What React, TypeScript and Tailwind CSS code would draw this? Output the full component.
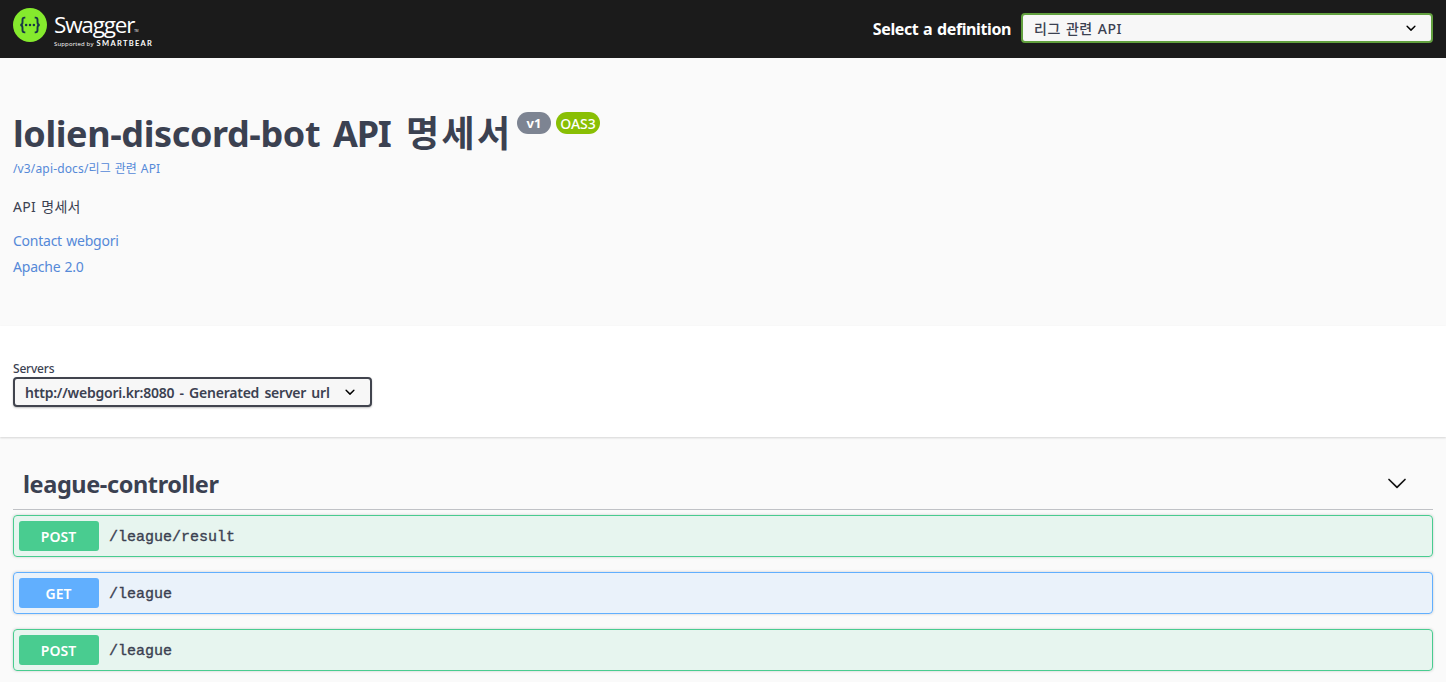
function Chevron() {
  return (
    <svg width="20" height="20" viewBox="0 0 20 20">
      <path d="M13.418 7.859a.695.695 0 0 1 .978 0 .68.68 0 0 1 0 .969l-3.908 3.83a.697.697 0 0 1-.979 0l-3.908-3.83a.68.68 0 0 1 0-.969.695.695 0 0 1 .978 0L10 11l3.418-3.141z" />
    </svg>
  );
}

function LargeChevron() {
  return (
    <svg width="20" height="20" viewBox="0 0 20 20" fill="none" stroke="#111" strokeWidth="1.7" strokeLinecap="round" strokeLinejoin="round">
      <path d="M2 5.5 10 13.3 18 5.5" />
    </svg>
  );
}

function Logo() {
  return (
    <div className="flex w-[150px] shrink-0">
      <svg width="34" height="34" viewBox="0 0 34 34" className="mt-2 shrink-0">
        <circle cx="17" cy="17" r="17" fill="#85ea2d" />
        <g fill="none" stroke="#173647" strokeWidth="1.9">
          <path d="M12.3 9.6h-.8c-1.5 0-2 .8-2 2.1v2.6c0 1.7-.6 2.5-2.1 2.7 1.5.2 2.1 1 2.1 2.7v2.6c0 1.3.5 2.1 2 2.1h.8" />
          <path d="M21.7 9.6h.8c1.5 0 2 .8 2 2.1v2.6c0 1.7.6 2.5 2.1 2.7-1.5.2-2.1 1-2.1 2.7v2.6c0 1.3-.5 2.1-2 2.1h-.8" />
        </g>
        <g fill="#173647">
          <circle cx="13.1" cy="17" r="1.25" />
          <circle cx="17" cy="17" r="1.25" />
          <circle cx="20.9" cy="17" r="1.25" />
        </g>
      </svg>
      <div className="ml-[7px] flex flex-col pt-[11px] font-['Open_Sans',sans-serif] text-white">
        <div className="flex items-end leading-[27px]">
          <span className="text-[22.5px] tracking-[-1.2px]">Swagger</span>
          <span className="pb-[5px] text-[3px] leading-[4px]">TM</span>
        </div>
        <div className="mt-px flex items-center gap-[3px] whitespace-nowrap leading-[10px]">
          <span className="text-[6px] tracking-[0.15px]">Supported by</span>
          <span className="font-[Lato] text-[7.5px] font-bold tracking-[1.3px]">SMARTBEAR</span>
        </div>
      </div>
    </div>
  );
}

const operations = [
  { method: "POST", path: "/league/result" },
  { method: "GET", path: "/league" },
  { method: "POST", path: "/league" },
];

const boxStyles: Record<string, string> = {
  POST: "border-[#49cc90] bg-[#49cc90]/10",
  GET: "border-[#61affe] bg-[#61affe]/10",
};
const badgeStyles: Record<string, string> = {
  POST: "bg-[#49cc90]",
  GET: "bg-[#61affe]",
};

function Operation({ method, path }: { method: string; path: string }) {
  return (
    <div className={`flex h-[42px] items-center rounded-[4px] border p-[5px] shadow-[0_0_3px_rgba(0,0,0,0.19)] ${boxStyles[method]}`}>
      <span className={`flex h-[30px] w-20 items-center justify-center rounded-[3px] pr-px text-[14px] font-semibold text-white ${badgeStyles[method]}`}>
        {method}
      </span>
      <span className="ml-[10px] pt-1 font-['Liberation_Mono',monospace] text-[15px] [-webkit-text-stroke:0.35px_#3b4151]">{path}</span>
    </div>
  );
}

export default function App() {
  return (
    <div className="h-[682px] overflow-hidden bg-[#fafafa] font-['Noto_Sans','Noto_Sans_CJK_KR',sans-serif] text-[#3b4151]">
      <header className="flex h-[58px] items-start bg-[#1b1b1b] px-[13px]">
        <Logo />
        <div className="ml-auto flex items-center pt-[13px]">
          <span className="mr-[10px] pt-[2px] text-[16px] font-bold tracking-[-0.4px] text-white [word-spacing:1px]">Select a definition</span>
          <div className="flex h-[30px] w-[412px] items-center justify-between rounded-[4px] border-2 border-[#62a03f] bg-[#f7f7f7] pr-[10px] pl-[11px]">
            <span className="text-[14px] font-medium tracking-[0.5px] [word-spacing:1px]">리그 관련 API</span>
            <Chevron />
          </div>
        </div>
      </header>

      <section className="h-[268px] px-[13px] pt-[50px]">
        <h2 className="flex h-[50px] items-start whitespace-nowrap text-[36px] leading-[51px] font-bold">
          <span className="w-[320px] tracking-[-0.4px]">lolien-discord-bot</span>
          <span className="w-[73px] tracking-[-1.2px]">API</span>
          <span className="w-[98px] tracking-[2.4px]">명세서</span>
          <span className="mt-[4px] ml-[13px] flex h-[22px] w-[34px] items-center justify-center rounded-full bg-[#7d8492] pt-px text-[13px] leading-none text-white">v1</span>
          <span className="mt-[4px] ml-[5px] flex h-[22px] w-[44px] items-center justify-center rounded-full bg-[#89bf04] pt-px text-[14px] leading-none font-medium text-white">OAS3</span>
        </h2>
        <div className="mt-px flex h-5 items-center text-[12px] tracking-[0.15px] text-[#5589d8] [word-spacing:0.5px]">/v3/api-docs/리그 관련 API</div>
        <p className="mt-[17px] flex h-5 items-center text-[14px] tracking-[0.25px] [word-spacing:1.5px]">API 명세서</p>
        <div className="mt-[14px] flex h-5 items-center text-[14px] tracking-[-0.25px] text-[#5589d8] [word-spacing:1px]">Contact webgori</div>
        <div className="mt-[6px] flex h-5 items-center text-[14px] tracking-[-0.2px] text-[#5589d8] [word-spacing:0.5px]">Apache 2.0</div>
      </section>

      <section className="h-[111px] bg-white px-[13px] pt-[34px] shadow-[0_1px_2px_rgba(0,0,0,0.15)]">
        <div className="flex h-[17px] items-center text-[12px] font-medium tracking-[-0.2px]">Servers</div>
        <div className="flex h-[30px] w-[359px] items-center justify-between rounded-[4px] border-2 border-[#41444e] bg-[#f7f7f7] pr-[10px] pl-[10px] shadow-[0_1px_2px_rgba(0,0,0,0.25)]">
          <span className="text-[14px] font-semibold tracking-[-0.22px] [word-spacing:1.8px]">http://webgori.kr:8080 - Generated server url</span>
          <Chevron />
        </div>
      </section>

      <section className="px-[13px] pt-[22px]">
        <div className="mb-[5px] flex h-[51px] items-center justify-between border-b border-[#3b4151]/30 pr-[26px] pl-[10px]">
          <h3 className="pt-[2px] text-[23.5px] font-bold tracking-[-0.4px]">league-controller</h3>
          <LargeChevron />
        </div>
        <div className="flex flex-col gap-[15px]">
          {operations.map((op, i) => (
            <Operation key={i} {...op} />
          ))}
        </div>
      </section>
    </div>
  );
}
